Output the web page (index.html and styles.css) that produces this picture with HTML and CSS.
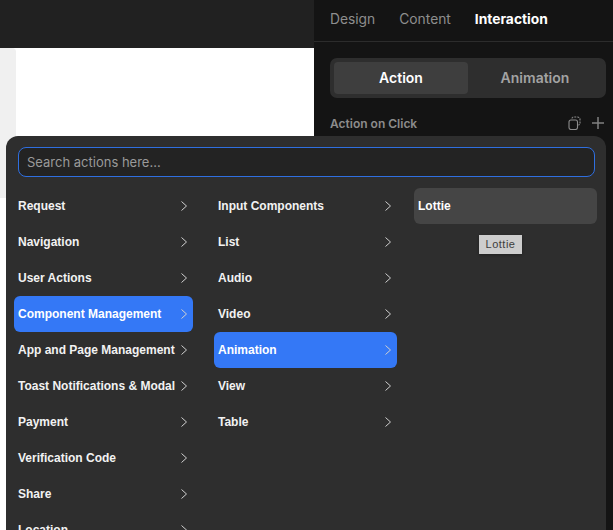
FILE: index.html
```html
<!DOCTYPE html>
<html lang="en">
<head>
    <meta charset="UTF-8">
    <title>Action on Click</title>
    <link rel="stylesheet" href="styles.css">
</head>
<body>
    <div class="editor">
        <div class="stage">
            <div class="topbar"></div>
            <div class="canvas">
                <div class="canvas-side"></div>
            </div>
        </div>
        <aside class="panel">
            <nav class="tabs">
                <span class="tab">Design</span>
                <span class="tab">Content</span>
                <span class="tab tab-on">Interaction</span>
            </nav>
            <div class="segment">
                <span class="segment-btn segment-on">Action</span>
                <span class="segment-btn">Animation</span>
            </div>
            <div class="panel-head">
                <span>Action on Click</span>
                <div class="panel-icons">
                    <svg width="13" height="14" viewBox="0 0 13 14" fill="none" stroke="#8c8c8c" stroke-width="1.1">
                        <path d="M4 2.6V2.5A1.5 1.5 0 0 1 5.500 1h4A2.500 2.500 0 0 1 12 3.500v4A1.500 1.500 0 0 1 10.500 9h-.2" stroke-dasharray="2 1"/>
                        <rect x="1" y="4" width="8.500" height="9.500" rx="2"/>
                    </svg>
                    <svg width="12" height="12" viewBox="0 0 12 12" fill="none" stroke="#808080" stroke-width="1.500">
                        <path d="M6 0v12M0 6h12"/>
                    </svg>
                </div>
            </div>
        </aside>
    </div>

    <div class="picker">
        <div class="search">Search actions here...</div>
        <div class="columns">
            <ul class="col col-first">
                <li class="item">Request<svg class="chev" viewBox="0 0 8 12"><path d="M1.500 1.500 6.500 6l-5 4.500"/></svg></li>
                <li class="item">Navigation<svg class="chev" viewBox="0 0 8 12"><path d="M1.500 1.500 6.500 6l-5 4.500"/></svg></li>
                <li class="item">User Actions<svg class="chev" viewBox="0 0 8 12"><path d="M1.500 1.500 6.500 6l-5 4.500"/></svg></li>
                <li class="item item-on">Component Management<svg class="chev" viewBox="0 0 8 12"><path d="M1.500 1.500 6.500 6l-5 4.500"/></svg></li>
                <li class="item">App and Page Management<svg class="chev" viewBox="0 0 8 12"><path d="M1.500 1.500 6.500 6l-5 4.500"/></svg></li>
                <li class="item">Toast Notifications &amp; Modal<svg class="chev" viewBox="0 0 8 12"><path d="M1.500 1.500 6.500 6l-5 4.500"/></svg></li>
                <li class="item">Payment<svg class="chev" viewBox="0 0 8 12"><path d="M1.500 1.500 6.500 6l-5 4.500"/></svg></li>
                <li class="item">Verification Code<svg class="chev" viewBox="0 0 8 12"><path d="M1.500 1.500 6.500 6l-5 4.500"/></svg></li>
                <li class="item">Share<svg class="chev" viewBox="0 0 8 12"><path d="M1.500 1.500 6.500 6l-5 4.500"/></svg></li>
                <li class="item">Location<svg class="chev" viewBox="0 0 8 12"><path d="M1.500 1.500 6.500 6l-5 4.500"/></svg></li>
            </ul>
            <ul class="col">
                <li class="item">Input Components<svg class="chev" viewBox="0 0 8 12"><path d="M1.500 1.500 6.500 6l-5 4.500"/></svg></li>
                <li class="item">List<svg class="chev" viewBox="0 0 8 12"><path d="M1.500 1.500 6.500 6l-5 4.500"/></svg></li>
                <li class="item">Audio<svg class="chev" viewBox="0 0 8 12"><path d="M1.500 1.500 6.500 6l-5 4.500"/></svg></li>
                <li class="item">Video<svg class="chev" viewBox="0 0 8 12"><path d="M1.500 1.500 6.500 6l-5 4.500"/></svg></li>
                <li class="item item-on">Animation<svg class="chev" viewBox="0 0 8 12"><path d="M1.500 1.500 6.500 6l-5 4.500"/></svg></li>
                <li class="item">View<svg class="chev" viewBox="0 0 8 12"><path d="M1.500 1.500 6.500 6l-5 4.500"/></svg></li>
                <li class="item">Table<svg class="chev" viewBox="0 0 8 12"><path d="M1.500 1.500 6.500 6l-5 4.500"/></svg></li>
            </ul>
            <ul class="col col-last">
                <li class="item item-hover">Lottie</li>
                <li class="tip">Lottie</li>
            </ul>
        </div>
    </div>
</body>
</html>
```

FILE: styles.css
```css
html, body {
    margin: 0;
    height: 100%;
    overflow: hidden;
    background-color: #fff;
}
.editor {
    display: flex;
    height: 530px;
}
.stage {
    width: 314px;
}
.topbar {
    height: 48px;
    background-color: #212121;
}
.canvas {
    height: 150px;
    background-color: #fff;
}
.canvas-side {
    width: 16px;
    height: 100%;
    background-color: #f0f0f0;
    border-top-right-radius: 4px;
}
.panel {
    flex: 1;
    background-color: #141414;
    font-family: Inter, sans-serif;
}
.tabs {
    display: flex;
    gap: 24px;
    height: 38px;
    padding: 0 0 3px 16px;
    align-items: center;
    border-bottom: 1px solid #2c2c2c;
    font-size: 13.8px;
    color: #8e8e8e;
}
.tab-on {
    color: #fff;
    font-weight: 700;
}
.segment {
    display: flex;
    width: 268px;
    height: 32px;
    margin: 16px 0 0 16px;
    padding: 4px;
    background-color: #2e2e2e;
    border-radius: 7px;
}
.segment-btn {
    flex: 1;
    display: flex;
    align-items: center;
    justify-content: center;
    padding-bottom: 1px;
    border-radius: 4px;
    font-size: 14px;
    font-weight: 600;
    color: #a3a3a3;
}
.segment-on {
    background-color: #3e3e3e;
    color: #fff;
}
.panel-head {
    display: flex;
    justify-content: space-between;
    align-items: center;
    margin: 16px 9px 0 16px;
    height: 18px;
    font-size: 12px;
    font-weight: 600;
    color: #8c8c8c;
}
.panel-icons {
    display: flex;
    align-items: center;
    gap: 11px;
}

/* popup over the editor */
.picker {
    position: absolute;
    left: 6px;
    top: 136px;
    width: 600px;
    height: 420px;
    box-sizing: border-box;
    padding: 11px 8px 0 8px;
    background-color: #2e2e2e;
    border-radius: 12px;
}
.search {
    box-sizing: border-box;
    width: 577px;
    height: 30px;
    margin-left: 4px;
    padding-left: 8px;
    display: flex;
    align-items: center;
    background-color: #232323;
    border: 1px solid #2f6fe0;
    border-radius: 8px;
    font-family: Inter, sans-serif;
    font-size: 13px;
    color: #9a9a9a;
}
.columns {
    display: grid;
    grid-template-columns: 200px 200px 183px;
    margin-top: 11px;
}
.col {
    list-style: none;
    margin: 0;
    padding: 0;
    position: relative;
}
.item {
    display: flex;
    align-items: center;
    justify-content: space-between;
    width: 183px;
    height: 36px;
    box-sizing: border-box;
    padding: 0 5px 0 4px;
    border-radius: 6px;
    font-family: "Liberation Sans", Arial, sans-serif;
    font-size: 12px;
    font-weight: 700;
    color: #f2f2f2;
    white-space: nowrap;
}
.col-first .item {
    width: 179px;
}
.item-on {
    background-color: #3478f6;
    color: #fff;
}
.item-hover {
    background-color: #454545;
    color: #fff;
}
.chev {
    width: 8px;
    height: 12px;
    flex-shrink: 0;
    fill: none;
    stroke: #d0d0d0;
    stroke-width: 1;
}
.tip {
    position: absolute;
    left: 65px;
    top: 47px;
    width: 43px;
    height: 19px;
    line-height: 19px;
    text-align: center;
    background-color: #cdcdcd;
    box-shadow: 0 1px 3px rgba(0, 0, 0, .3);
    font-family: "Liberation Sans", Arial, sans-serif;
    font-size: 11px;
    letter-spacing: .5px;
    color: #3c3c3c;
}
```
